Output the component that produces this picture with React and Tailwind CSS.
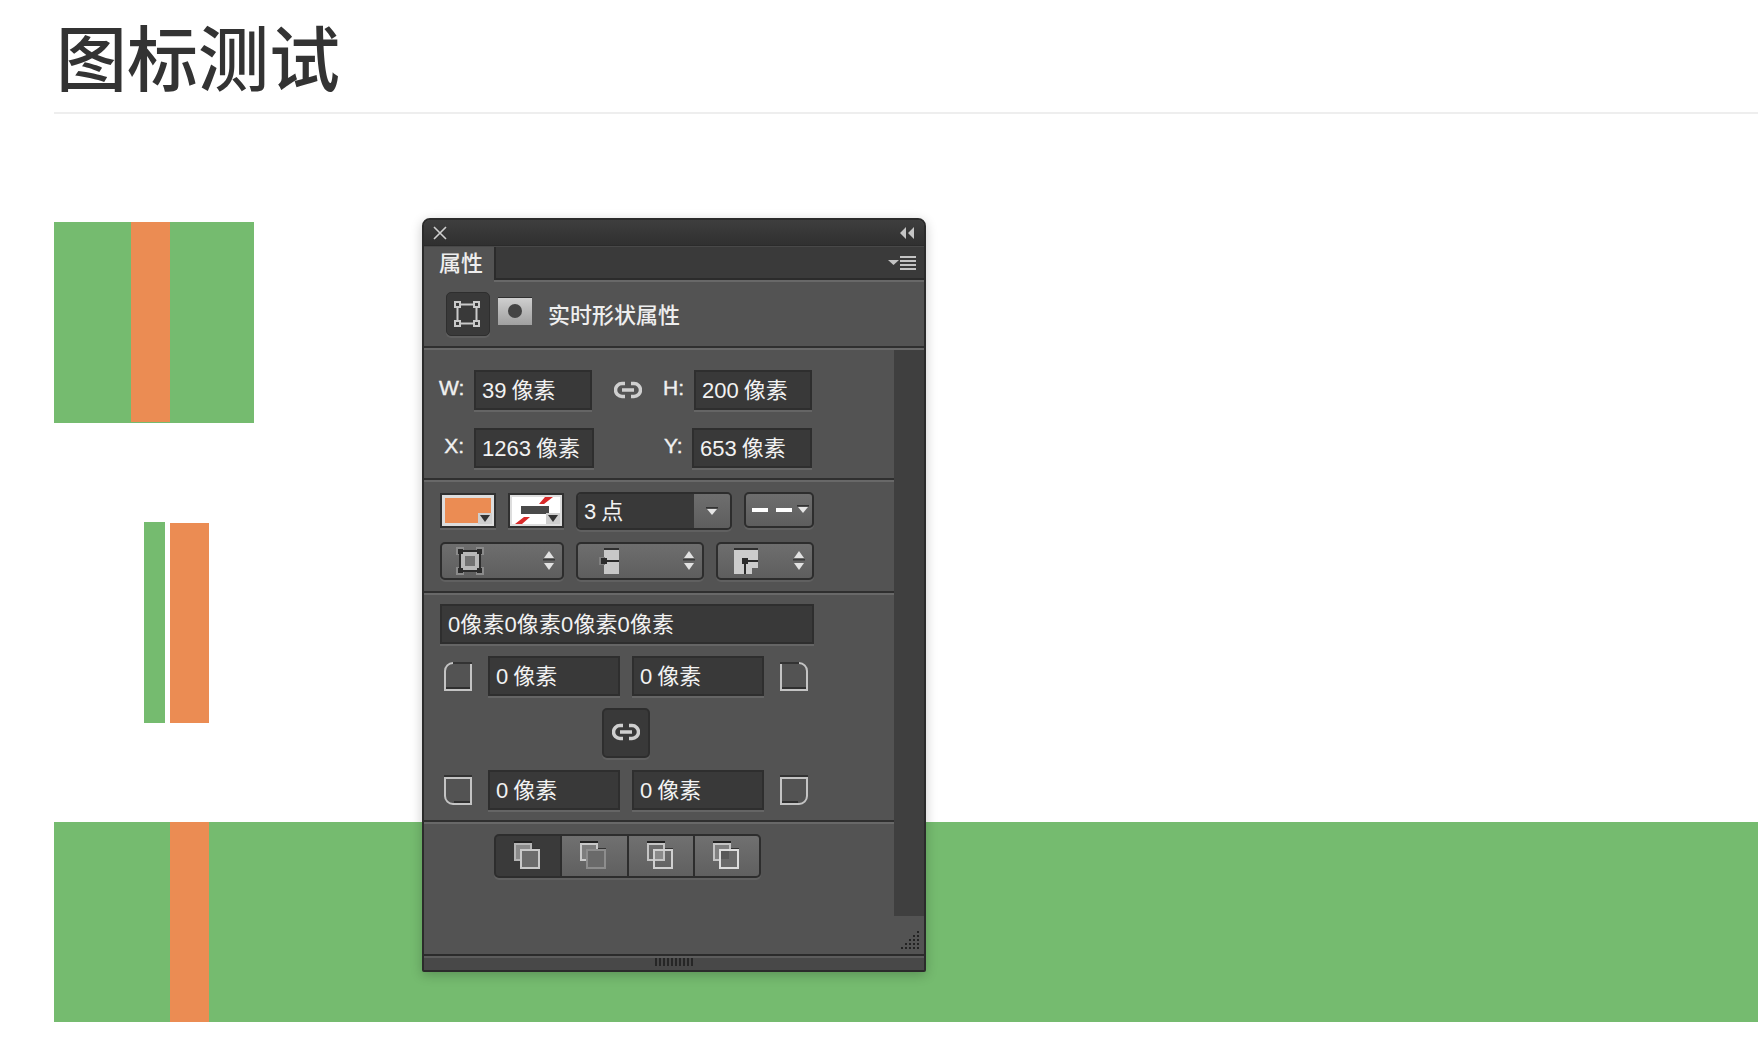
const font = { fontFamily: '"Liberation Sans", "Noto Sans CJK SC", sans-serif' };

// 面板里的深色输入框
const Field = ({ className = '', children }) => (
  <div className={`flex items-center h-[40px] pl-[6px] bg-[#393939] border-2 border-[#2e2e2e] shadow-[0_2px_0_0_#656565] text-[22px] text-[#f2f2f2] [word-spacing:-1px] whitespace-nowrap ${className}`}>
    {children}
  </div>
);

const Label = ({ className = '', children }) => (
  <div className={`mb-[5px] text-right text-[21px] text-[#f0f0f0] [-webkit-text-stroke:0.4px_#f0f0f0] ${className}`}>
    {children}
  </div>
);

const Divider = () => (
  <div className="h-[4px] border-t-2 border-[#2f2f2f] bg-[#686868]" />
);

const LinkIcon = ({ className = '' }) => (
  <svg width="28" height="18" viewBox="0 0 28 18" fill="none" stroke="#cfcfcf" strokeWidth="3.5" className={className}>
    <path d="M11 2.5H8a6.5 6.5 0 0 0 0 13h3" />
    <path d="M17 2.5h3a6.5 6.5 0 0 1 0 13h-3" />
    <path d="M8 9h12" />
  </svg>
);

const Caret = ({ className = '' }) => (
  <svg width="12" height="9" viewBox="0 0 12 9" className={className}>
    <rect x="0" y="0" width="12" height="1.5" fill="#333333" />
    <path d="M1 2h10L6 8z" fill="#e6e6e6" />
  </svg>
);

const UpDown = ({ className = '' }) => (
  <svg width="12" height="20" viewBox="0 0 12 20" className={className}>
    <path d="M6 0l5 7H1z" fill="#e2e2e2" />
    <rect x="0" y="8" width="12" height="1.5" fill="#3a3a3a" />
    <path d="M1 12h10l-5 7z" fill="#e2e2e2" />
  </svg>
);

const Dropdown = ({ className = '', children }) => (
  <div className={`flex items-center justify-between h-[38px] rounded-[5px] border-2 border-[#2d2d2d] bg-gradient-to-b from-[#6e6e6e] to-[#5e5e5e] shadow-[0_2px_0_0_#606060] ${className}`}>
    {children}
    <UpDown className="mr-[7px]" />
  </div>
);

const Swatch = ({ className = '', children }) => (
  <div className={`relative w-[56px] h-[35px] border-2 border-[#303030] bg-[#dddddd] shadow-[0_2px_0_0_#646464] ${className}`}>
    {children}
    <div className="absolute right-[2px] bottom-[2px] w-[14px] h-[11px] bg-[#cfcfcf] flex items-center justify-center">
      <svg width="10" height="7" viewBox="0 0 10 7"><path d="M0 0h10L5 7z" fill="#333333" /></svg>
    </div>
  </div>
);

// 四个角的图标：light 是亮边，dark 是顶上的暗线，inner 是底边内侧的黑线
const Corner = ({ light, dark, inner, className = '' }) => (
  <svg width="28" height="30" viewBox="0 0 28 30" fill="none" className={className}>
    <path d={dark} stroke="#333333" strokeWidth="2" />
    <path d={light} stroke="#c4c4c4" strokeWidth="2" />
    <path d={inner} stroke="#2f2f2f" strokeWidth="2" />
  </svg>
);

const Overlap = ({ back, front, backFill = 'none', frontFill = 'none', middle }) => (
  <svg width="26" height="28" viewBox="0 0 26 28" fill="none">
    <rect x="0" y="0" width="18" height="2" fill="#222222" />
    <rect x="18" y="7" width="8" height="2" fill="#333333" />
    <rect x="1" y="3" width="16" height="16" stroke={back} strokeWidth="2" fill={backFill} />
    <rect x="7" y="9" width="18" height="18" stroke={front} strokeWidth="2" fill={frontFill} />
    {middle && <rect x="8" y="10" width="8" height="8" fill={middle} />}
  </svg>
);

const Segment = ({ active, children }) => (
  <div className={`flex flex-1 items-center justify-center pb-[2px] pr-[2px] ${active ? 'bg-[#3a3a3a]' : 'bg-gradient-to-b from-[#707070] to-[#606060]'}`}>
    {children}
  </div>
);

function Panel() {
  return (
    <div style={font} className="absolute left-[422px] top-[218px] w-[504px] h-[754px] flex flex-col border-2 border-[#2b2b2b] rounded-t-[8px] rounded-b-[2px] bg-[#535353] shadow-[0_3px_12px_rgba(0,0,0,0.22)]">
      {/* 标题栏 */}
      <div className="flex items-center justify-between h-[26px] px-[10px] rounded-t-[6px] bg-gradient-to-b from-[#3e3e3e] to-[#303030] border-b border-[#2b2b2b]">
        <svg width="14" height="14" viewBox="0 0 14 14" stroke="#d0d0d0" strokeWidth="1.6" className="ml-[-1px]"><path d="M1 1l12 12M13 1L1 13" /></svg>
        <svg width="14" height="12" viewBox="0 0 14 12" fill="#c4c4c4"><path d="M6 0v12L0 6zM14 0v12L8 6z" /></svg>
      </div>

      {/* 标签栏 */}
      <div className="flex h-[36px] bg-[#3a3a3a] border-t border-[#484848]">
        <div className="w-[70px] h-[36px] pl-[15px] bg-[#535353] text-[22px] leading-[34px] text-[#eeeeee] font-medium">属性</div>
        <div className="flex-1 flex flex-col">
          <div className="flex-1 flex items-center justify-end pr-[8px] pt-[2px] border-l-2 border-[#2b2b2b]">
            <svg width="28" height="16" viewBox="0 0 28 16">
              <path d="M0 4h11L5.5 9z" fill="#c4c4c4" />
              <path d="M12 1h16M12 5h16M12 9h16M12 13h16" stroke="#c4c4c4" strokeWidth="2" />
            </svg>
          </div>
          <div className="h-[4px] border-t-2 border-[#2b2b2b] bg-[#686868]" />
        </div>
      </div>

      {/* 实时形状属性 */}
      <div className="flex items-center h-[64px] pl-[22px]">
        <div className="flex items-center justify-center w-[44px] h-[44px] rounded-[5px] bg-[#393939] border border-[#2e2e2e] shadow-[0_2px_0_0_#5f5f5f]">
          <svg width="26" height="26" viewBox="0 0 26 26" fill="none" stroke="#c9c9c9" strokeWidth="2" className="mr-[3px] mb-[1px]">
            <rect x="3.5" y="3.5" width="19" height="19" />
            <rect x="1" y="1" width="5" height="5" fill="#393939" />
            <rect x="20" y="1" width="5" height="5" fill="#393939" />
            <rect x="1" y="20" width="5" height="5" fill="#393939" />
            <rect x="20" y="20" width="5" height="5" fill="#393939" />
          </svg>
        </div>
        <div className="flex items-center justify-center w-[34px] h-[28px] ml-[8px] mb-[7px] border-t border-[#2f2f2f] bg-gradient-to-b from-[#cfcfcf] to-[#a0a0a0]">
          <div className="w-[14px] h-[14px] rounded-full bg-[#444444]" />
        </div>
        <div className="ml-[16px] mt-[3px] text-[22px] text-[#eeeeee] font-medium">实时形状属性</div>
      </div>
      <Divider />

      <div className="flex flex-1">
        <div className="flex flex-col w-[470px]">
          {/* 尺寸和位置 */}
          <div className="h-[128px] pt-[20px] pl-[15px]">
            <div className="flex items-center h-[40px]">
              <Label className="w-[25px]">W:</Label>
              <Field className="w-[118px] ml-[10px]">39 像素</Field>
              <LinkIcon className="ml-[22px]" />
              <Label className="w-[22px] ml-[20px]">H:</Label>
              <Field className="w-[118px] ml-[10px]">200 像素</Field>
            </div>
            <div className="flex items-center h-[40px] mt-[18px]">
              <Label className="w-[25px]">X:</Label>
              <Field className="w-[120px] ml-[10px]">1263 像素</Field>
              <Label className="w-[17px] ml-[70px]">Y:</Label>
              <Field className="w-[120px] ml-[11px]">653 像素</Field>
            </div>
          </div>
          <Divider />

          {/* 填充和描边 */}
          <div className="h-[109px] pt-[10px] pl-[16px]">
            <div className="flex items-start h-[38px]">
              <Swatch className="mt-[1px]">
                <div className="absolute inset-[3px] bg-[#eb8c53]" />
              </Swatch>
              <Swatch className="ml-[12px] mt-[1px]">
                <div className="absolute inset-[2px] bg-white overflow-hidden">
                  <svg width="48" height="27" viewBox="0 0 48 27">
                    <path d="M33 0h8l-9 7h-5zM12 20h6l-8 7H3z" fill="#d92a2a" />
                    <rect x="9" y="9" width="28" height="8" fill="#4a4a4a" />
                  </svg>
                </div>
              </Swatch>
              <div className="flex w-[156px] h-[38px] ml-[12px] rounded-[5px] border-2 border-[#2d2d2d] overflow-hidden shadow-[0_2px_0_0_#606060]">
                <div className="flex-1 flex items-center pl-[6px] bg-[#393939] text-[22px] text-[#f2f2f2] [word-spacing:-1px]">3 点</div>
                <div className="flex items-center justify-center w-[36px] bg-gradient-to-b from-[#6e6e6e] to-[#5e5e5e]">
                  <Caret />
                </div>
              </div>
              <div className="flex items-center w-[70px] h-[36px] ml-[12px] pl-[6px] rounded-[5px] border-2 border-[#2d2d2d] bg-gradient-to-b from-[#6e6e6e] to-[#5e5e5e] shadow-[0_2px_0_0_#606060]">
                <div className="w-[16px] h-[4px] bg-white" />
                <div className="w-[16px] h-[4px] ml-[8px] bg-white" />
                <Caret className="ml-[5px] mb-[2px]" />
              </div>
            </div>
            <div className="flex items-center mt-[12px]">
              <Dropdown className="w-[124px]">
                <svg width="28" height="28" viewBox="0 0 28 28" fill="none" className="ml-[14px]">
                  <path d="M0 0h8v8H0zM20 0h8v8h-8zM0 20h8v8H0zM20 20h8v8h-8z" fill="#8a8a8a" />
                  <rect x="4" y="4" width="20" height="20" fill="#b8b8b8" stroke="#2b2b2b" strokeWidth="2" />
                  <rect x="9" y="9" width="10" height="10" fill="#727272" />
                  <path d="M2 2h5v5H2zM21 2h5v5h-5zM2 21h5v5H2zM21 21h5v5h-5z" fill="#2b2b2b" />
                </svg>
              </Dropdown>
              <Dropdown className="w-[128px] ml-[12px]">
                <svg width="20" height="26" viewBox="0 0 20 26" className="ml-[21px]">
                  <rect x="5" y="0" width="15" height="26" fill="#c8c8c8" />
                  <rect x="5" y="0" width="15" height="2" fill="#2e2e2e" />
                  <rect x="0" y="9" width="6" height="8" fill="#808080" />
                  <rect x="2" y="10" width="6" height="6" fill="#2b2b2b" />
                  <rect x="8" y="12" width="12" height="2" fill="#2b2b2b" />
                </svg>
              </Dropdown>
              <Dropdown className="w-[98px] ml-[12px]">
                <svg width="24" height="26" viewBox="0 0 24 26" className="ml-[16px]">
                  <path d="M0 0h24v20h-6v6H0z" fill="#cccccc" />
                  <rect x="0" y="0" width="24" height="2" fill="#2e2e2e" />
                  <rect x="8" y="10" width="6" height="6" fill="#2b2b2b" />
                  <rect x="12" y="12" width="12" height="2" fill="#2b2b2b" />
                  <rect x="10" y="14" width="2" height="12" fill="#2b2b2b" />
                </svg>
              </Dropdown>
            </div>
          </div>
          <Divider />

          {/* 圆角 */}
          <div className="h-[225px] pt-[9px] pl-[16px]">
            <Field className="w-[374px] [word-spacing:0] tracking-[0.1px]">0像素0像素0像素0像素</Field>
            <div className="flex items-center h-[40px] mt-[12px]">
              <Corner className="ml-[4px]" light="M9 2A8 8 0 0 0 1 10V29H27V3" dark="M8 2H28" inner="M2 27h24" />
              <Field className="w-[132px] ml-[16px]">0 像素</Field>
              <Field className="w-[132px] ml-[12px]">0 像素</Field>
              <Corner className="ml-[16px]" light="M19 2a8 8 0 0 1 8 8v19H1V3" dark="M0 2H20" inner="M2 27h24" />
            </div>
            <div className="flex items-center justify-center w-[48px] h-[50px] mt-[12px] ml-[162px] rounded-[5px] bg-[#393939] border-2 border-[#2e2e2e] shadow-[0_2px_0_0_#606060]">
              <LinkIcon className="mb-[2px]" />
            </div>
            <div className="flex items-center h-[40px] mt-[12px]">
              <Corner className="ml-[4px]" light="M1 3V21a8 8 0 0 0 8 8H27V3z" dark="M0 1h28" inner="M10 27h16" />
              <Field className="w-[132px] ml-[16px]">0 像素</Field>
              <Field className="w-[132px] ml-[12px]">0 像素</Field>
              <Corner className="ml-[16px]" light="M27 3V21a8 8 0 0 1-8 8H1V3z" dark="M0 1h28" inner="M2 27h16" />
            </div>
          </div>
          <Divider />

          {/* 路径操作 */}
          <div className="pt-[10px] pl-[70px]">
            <div className="flex w-[267px] h-[44px] rounded-[5px] border-2 border-[#2d2d2d] bg-[#2d2d2d] gap-[2px] overflow-hidden shadow-[0_2px_0_0_#606060]">
              <Segment active><Overlap back="#b5b5b5" front="#c9c9c9" backFill="#8a8a8a" frontFill="#6c6c6c" /></Segment>
              <Segment><Overlap back="#c9c9c9" front="#8d8d8d" backFill="#7d7d7d" frontFill="#6a6a6a" /></Segment>
              <Segment><Overlap back="#c4c4c4" front="#d0d0d0" middle="#8a8a8a" /></Segment>
              <Segment><Overlap back="#c4c4c4" front="#dddddd" backFill="#808080" frontFill="#6a6a6a" middle="#585858" /></Segment>
            </div>
          </div>
        </div>
        <div className="w-[30px] h-[566px] bg-[#3f3f3f]" />
      </div>

      {/* 右下角的拖拽点 */}
      <svg width="20" height="22" viewBox="0 0 20 22" className="absolute right-[3px] bottom-[17px]" fill="#222222">
        <path d="M16 0h2v2h-2zM12 4h2v2h-2zM16 4h2v2h-2zM8 8h2v2H8zM12 8h2v2h-2zM16 8h2v2h-2zM4 12h2v2H4zM8 12h2v2H8zM12 12h2v2h-2zM16 12h2v2h-2zM0 16h2v2H0zM4 16h2v2H4zM8 16h2v2H8zM12 16h2v2h-2zM16 16h2v2h-2z" />
      </svg>

      {/* 底部把手 */}
      <div className="flex justify-center h-[16px] border-t-2 border-[#2b2b2b] bg-[#484848]">
        <div className="w-full">
          <div className="h-[2px] bg-[#5c5c5c]" />
          <div className="flex justify-center gap-[2px]">
            {[0, 1, 2, 3, 4, 5, 6, 7, 8, 9].map((i) => (
              <div key={i} className="w-[2px] h-[8px] bg-[#262626]" />
            ))}
          </div>
        </div>
      </div>
    </div>
  );
}

export default function App() {
  return (
    <div className="relative w-[1758px] h-[1048px] bg-white overflow-hidden pl-[54px]">
      <h1 style={font} className="h-[114px] pl-[2px] border-b-2 border-[#eeeeee] text-[71px] leading-[122px] text-[#333333] font-medium">图标测试</h1>

      <div className="w-[200px] h-[201px] mt-[108px] bg-[#75bb6f]">
        <div className="w-[39px] h-[200px] ml-[77px] bg-[#eb8c53]" />
      </div>

      <div className="flex gap-[5px] h-[201px] mt-[99px] ml-[90px]">
        <div className="w-[21px] bg-[#75bb6f]" />
        <div className="w-[39px] mt-[1px] bg-[#eb8c53]" />
      </div>

      <div className="h-[200px] mt-[99px] bg-[#75bb6f]">
        <div className="w-[39px] h-[200px] ml-[116px] bg-[#eb8c53]" />
      </div>

      <Panel />
    </div>
  );
}
